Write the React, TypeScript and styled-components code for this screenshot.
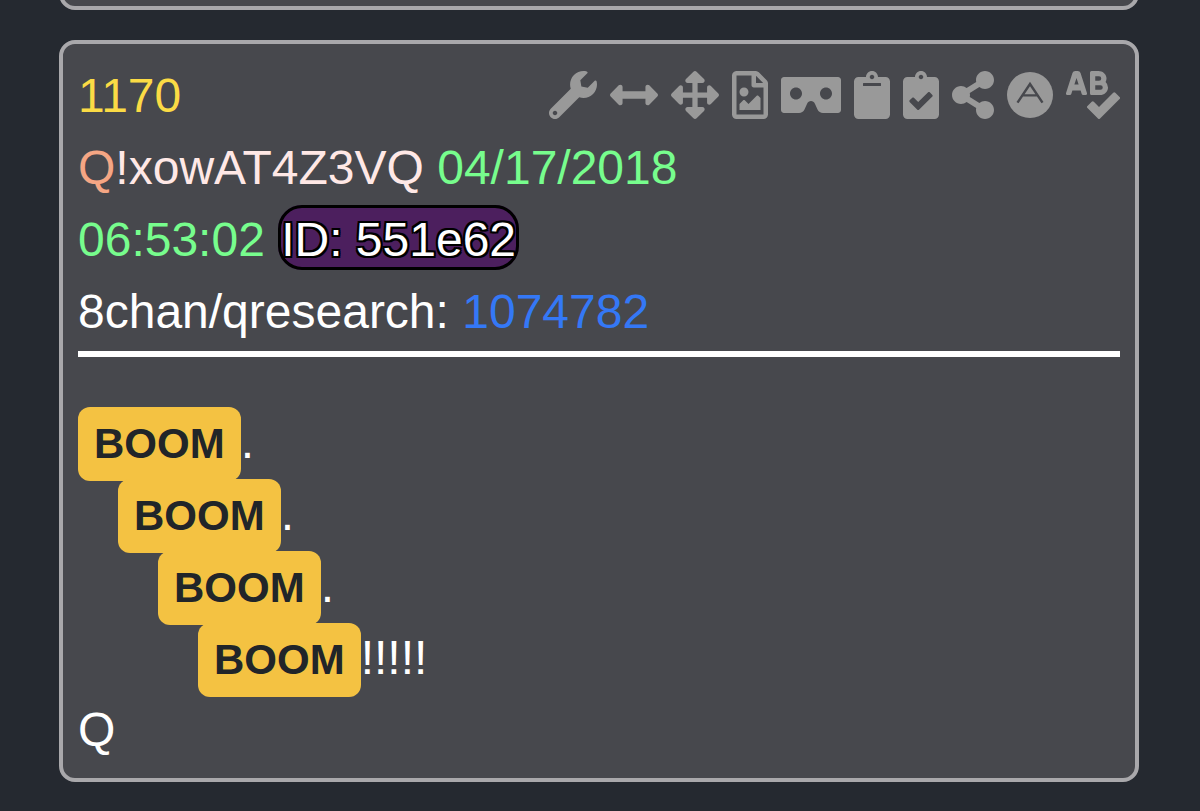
import React from "react";
import styled, { createGlobalStyle } from "styled-components";
import {
  FaWrench,
  FaArrowsAltH,
  FaArrowsAlt,
  FaRegFileImage,
  FaVrCardboard,
  FaClipboard,
  FaClipboardCheck,
  FaShareAlt,
  FaSpellCheck,
} from "react-icons/fa";

const GlobalStyle = createGlobalStyle`
  * { box-sizing: border-box; }
  body {
    margin: 0;
    background: #252930;
    color: #ffffff;
    font-family: "Liberation Sans", Arial, sans-serif;
    font-size: 48px;
    line-height: 72px;
  }
`;

const Feed = styled.main`
  display: flex;
  flex-direction: column;
  gap: 30px;
  padding: 0 61px 29px 59px;
  overflow: hidden;
`;

const Card = styled.article`
  padding: 16px 15px 12px;
  background: #47484d;
  border: 4px solid #a9a8ab;
  border-radius: 16px;
`;

const PreviousCard = styled(Card)`
  margin-top: -40px;
  padding: 42px 0 0;
`;

const TitleRow = styled.div`
  display: flex;
  flex-wrap: wrap;
  justify-content: space-between;
  align-items: center;
`;

const Line = styled.div<{ $level?: number }>`
  padding-left: ${({ $level = 0 }) => $level * 40}px;
`;

const Toolbar = styled.div`
  display: flex;
  gap: 13px;
  padding-bottom: 2px;
`;

const IconButton = styled.button<{ $width: number }>`
  display: flex;
  align-items: center;
  width: ${({ $width }) => $width}px;
  height: 48px;
  padding: 0;
  border: 0;
  background: none;
  color: #999999;
  cursor: pointer;

  svg {
    display: block;
    width: 100%;
    height: 100%;
  }
`;

const Colored = styled.span<{ $color: string }>`
  color: ${({ $color }) => $color};
`;

const PostLink = styled.a<{ $color: string }>`
  color: ${({ $color }) => $color};
  text-decoration: none;
`;

const PosterId = styled.span`
  padding: 5px 0 1px;
  border: 3px solid #000000;
  border-radius: 24px;
  background: #4c1f5e;
  text-shadow:
    2px 0 #000, -2px 0 #000, 0 2px #000, 0 -2px #000,
    2px 2px #000, -2px 2px #000, 2px -2px #000, -2px -2px #000;
`;

const Divider = styled.hr`
  height: 6px;
  margin: 3px 0 49px;
  border: 0;
  background: #ffffff;
`;

const Badge = styled.mark`
  padding: 13px 16px 14px;
  border-radius: 12px;
  background: #f4c242;
  color: #212529;
  font-size: 42px;
  font-weight: 700;
  line-height: 1;
`;

const CircleA = () => (
  <svg viewBox="0 0 46 46" aria-hidden="true">
    <circle cx="23" cy="23" r="23" fill="currentColor" />
    <path
      d="M10.5 30.7 L23 12 L35.5 30.7 M16 23.4 H30"
      fill="none"
      stroke="#47484d"
      strokeWidth="2.4"
    />
  </svg>
);

const tools = [
  { label: "Tools", width: 48, icon: <FaWrench /> },
  { label: "Widen", width: 48, icon: <FaArrowsAltH /> },
  { label: "Expand", width: 48, icon: <FaArrowsAlt /> },
  { label: "Image", width: 36, icon: <FaRegFileImage /> },
  { label: "Viewer", width: 60, icon: <FaVrCardboard /> },
  { label: "Copy", width: 36, icon: <FaClipboard /> },
  { label: "Copy checked", width: 36, icon: <FaClipboardCheck /> },
  { label: "Share", width: 42, icon: <FaShareAlt /> },
  { label: "Archive", width: 46, icon: <CircleA /> },
  { label: "Spell check", width: 54, icon: <FaSpellCheck /> },
];

const booms = [".", ".", ".", "!!!!!"];

export default function App() {
  return (
    <>
      <GlobalStyle />
      <Feed>
        <PreviousCard />
        <Card>
          <header>
            <TitleRow>
              <PostLink href="#1170" $color="#fbdb45">
                1170
              </PostLink>
              <Toolbar role="toolbar">
                {tools.map(({ label, width, icon }) => (
                  <IconButton
                    key={label}
                    type="button"
                    aria-label={label}
                    $width={width}
                  >
                    {icon}
                  </IconButton>
                ))}
              </Toolbar>
            </TitleRow>
            <Line>
              <Colored $color="#f5a684">Q</Colored>
              <Colored $color="#ffe8e6">!xowAT4Z3VQ</Colored>{" "}
              <Colored $color="#77fd8d">04/17/2018</Colored>
            </Line>
            <Line>
              <Colored $color="#77fd8d">06:53:02</Colored>{" "}
              <PosterId>ID: 551e62</PosterId>
            </Line>
            <Line>
              8chan/qresearch:{" "}
              <PostLink href="#1074782" $color="#3478f6">
                1074782
              </PostLink>
            </Line>
          </header>
          <Divider />
          {booms.map((ending, level) => (
            <Line key={level} $level={level}>
              <Badge>BOOM</Badge>
              {ending}
            </Line>
          ))}
          <Line>Q</Line>
        </Card>
      </Feed>
    </>
  );
}
